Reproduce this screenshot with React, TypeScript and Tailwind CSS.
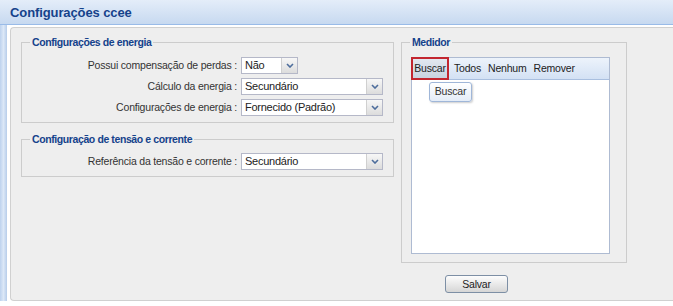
import React from "react";

function Chevron() {
  return (
    <svg width="8" height="5" viewBox="0 0 8 5" className="block">
      <path d="M1 1 L4 4 L7 1" fill="none" stroke="#4d6d9c" strokeWidth="1.6" />
    </svg>
  );
}

function Select({ value, width }: { value: string; width: string }) {
  return (
    <div className={`${width} h-[17px] bg-white border border-[#b5b8c8] flex items-stretch`}>
      <div className="flex-1 pl-[3px] text-[11px] tracking-[-0.25px] leading-[15px] text-[#222] whitespace-nowrap overflow-hidden">{value}</div>
      <div className="w-[16px] bg-linear-to-b from-[#f7f7f7] to-[#dcdcdc] border-l border-[#d0d0d0] flex items-center justify-center">
        <Chevron />
      </div>
    </div>
  );
}

function Row({ label, value, width }: { label: string; value: string; width: string }) {
  return (
    <div className="flex items-center">
      <div className="w-[215px] text-right text-[10.5px] tracking-[-0.2px] text-[#333] whitespace-nowrap">{label}</div>
      <div className="ml-[4px]">
        <Select value={value} width={width} />
      </div>
    </div>
  );
}

export default function App() {
  return (
    <div className="w-[673px] h-[306px] bg-white overflow-hidden flex flex-col font-['Liberation_Sans',Arial,sans-serif]">
      <div className="h-[25px] shrink-0 bg-linear-to-b from-[#e4edf9] to-[#c7d9f0] border-b border-[#99bbe8] flex items-center pl-[10px] pt-[1px]">
        <span className="text-[13px] font-bold tracking-[-0.1px] text-[#15428b]">Configurações ccee</span>
      </div>
      <div className="flex-1 flex">
        <div className="w-[7px] mb-[5px] bg-linear-to-r from-[#bdd2ee] via-[#dce8f7] to-[#b7cdea]" />
        <div className="flex-1 ml-[3px] mt-[2px] mb-[5px] bg-[#eeeeee] border border-r-0 border-[#d0d0d0] rounded-l-[4px] flex flex-col pl-[10px] pt-[8px]">
          <div className="flex gap-[7px]">
            <div className="w-[373px] flex flex-col">
              <fieldset className="border border-[#cccccc] pt-[8px] pb-[6px]">
                <legend className="ml-[8px] px-[2px] text-[10.5px] tracking-[-0.4px] leading-[13px] font-bold text-[#15428b]">Configurações de energia</legend>
                <div className="flex flex-col gap-[4px]">
                  <Row label="Possui compensação de perdas :" value="Não" width="w-[57px]" />
                  <Row label="Cálculo da energia :" value="Secundário" width="w-[142px]" />
                  <Row label="Configurações de energia :" value="Fornecido (Padrão)" width="w-[142px]" />
                </div>
              </fieldset>
              <fieldset className="mt-[10px] border border-[#cccccc] pt-[7px] pb-[6px]">
                <legend className="ml-[8px] px-[2px] text-[10.5px] tracking-[-0.4px] leading-[13px] font-bold text-[#15428b]">Configuração de tensão e corrente</legend>
                <Row label="Referência da tensão e corrente :" value="Secundário" width="w-[142px]" />
              </fieldset>
            </div>
            <fieldset className="w-[226px] border border-[#cccccc] pl-[9px] pr-[16px] pt-[8px] pb-[8px]">
              <legend className="ml-[-1px] px-[2px] text-[10.5px] tracking-[-0.4px] leading-[13px] font-bold text-[#15428b]">Medidor</legend>
              <div className="relative h-[197px] bg-white border border-[#aebbd2] flex flex-col">
                <div className="h-[22px] bg-linear-to-b from-[#edf3fb] to-[#d3e1f4] border-b border-[#a9bfdf] flex items-stretch gap-[1px] text-[10.5px] tracking-[-0.2px] text-[#222]">
                  <div className="w-[38px] -ml-[1px] -mt-[1px] mr-[1px] h-[23px] border-2 border-[#c3262f] bg-linear-to-b from-[#e2e8f0] to-[#c9d3e0] flex items-center justify-center">Buscar</div>
                  <div className="px-[3px] flex items-center">Todos</div>
                  <div className="px-[3px] flex items-center">Nenhum</div>
                  <div className="px-[3px] flex items-center">Remover</div>
                </div>
                <div className="absolute left-[17px] top-[24px] w-[43px] h-[20px] rounded-[3px] border border-[#9fb6d8] bg-linear-to-b from-[#ffffff] to-[#e4ecf7] shadow-[1px_1px_2px_rgba(0,0,0,0.2)] flex items-center justify-center text-[10.5px] tracking-[-0.2px] text-[#333]">
                  Buscar
                </div>
              </div>
            </fieldset>
          </div>
          <div className="ml-[424px] mt-[8px]">
            <button className="w-[63px] h-[18px] rounded-[3px] border border-[#7d8fa5] bg-linear-to-b from-[#fdfdfd] to-[#d6d6d6] text-[10.5px] tracking-[-0.2px] text-[#222] leading-[16px]">Salvar</button>
          </div>
        </div>
      </div>
    </div>
  );
}
